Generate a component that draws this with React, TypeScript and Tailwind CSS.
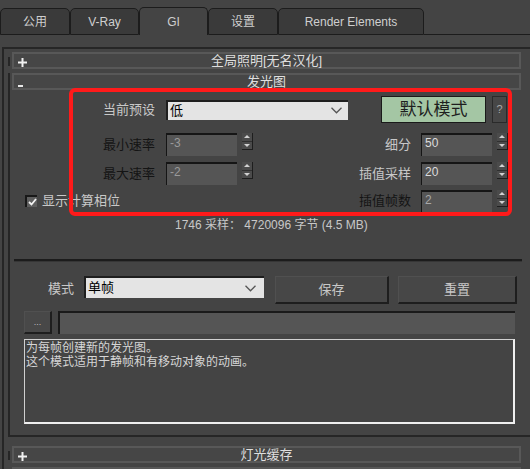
import React from 'react'

const font = "font-['Liberation_Sans','Noto_Sans_CJK_SC',sans-serif]"

function Tab({ label, w, active = false }: { label: string; w: string; active?: boolean }) {
  return (
    <div
      className={`flex items-center justify-center rounded-t-[5px] border-x border-t border-[#1c1c1c] text-[12px] text-[#cfcfcf] ${w} ${
        active ? 'h-[28px] bg-[#444444]' : 'h-[27px] border-b bg-[#3a3a3a]'
      }`}
    >
      {label}
    </div>
  )
}

function RolloutHeader({ open, title }: { open: boolean; title: string }) {
  return (
    <div className="grid h-[17px] w-[509px] grid-cols-[24px_1fr_24px] items-center border-2 border-[#585858] bg-[#464646] text-[13px] leading-[13px] text-[#dedede]">
      <div className="flex items-end justify-start pl-[4px] pt-[4px]">
        {open ? (
          <div className="mt-[4px] h-[2px] w-[5px] bg-[#e8e8e8]" />
        ) : (
          <svg width="9" height="9" viewBox="0 0 9 9">
            <rect x="3.5" y="0" width="2" height="9" fill="#f0f0f0" />
            <rect x="0" y="3.5" width="9" height="2" fill="#f0f0f0" />
          </svg>
        )}
      </div>
      <div className="text-center">{title}</div>
      <div />
    </div>
  )
}

function Spinner() {
  return (
    <div className="flex h-[17px] w-[11px] flex-col self-start border-r border-b border-[#1e1e1e] bg-[#4b4b4b]">
      <div className="flex flex-1 items-center justify-center border-b border-[#2f2f2f]">
        <div className="h-0 w-0 border-x-[3px] border-b-[3px] border-x-transparent border-b-[#d2d2d2]" />
      </div>
      <div className="flex flex-1 items-center justify-center">
        <div className="h-0 w-0 border-x-[3px] border-t-[3px] border-x-transparent border-t-[#d2d2d2]" />
      </div>
    </div>
  )
}

function NumField({ value, color }: { value: string; color: string }) {
  return (
    <div
      className={`h-full w-[71px] border-t-2 border-l border-[#151515] bg-[#555555] pl-[3px] pt-[1px] text-[12px] leading-[14px] ${color}`}
    >
      {value}
    </div>
  )
}

function Chevron() {
  return (
    <svg width="11" height="7" viewBox="0 0 11 7">
      <path d="M0.5 0.8 L5.5 5.8 L10.5 0.8" stroke="#555" strokeWidth="1.3" fill="none" />
    </svg>
  )
}

export default function App() {
  return (
    <div className={`relative h-[469px] w-[530px] overflow-hidden bg-[#444444] ${font}`}>
      {/* Tabs */}
      <div className="flex h-[35px] items-end pt-[7px]">
        <Tab label="公用" w="w-[70px]" />
        <Tab label="V-Ray" w="w-[69px]" />
        <Tab label="GI" w="w-[69px]" active />
        <Tab label="设置" w="w-[70px]" />
        <Tab label="Render Elements" w="w-[146px]" />
        <div className="h-full flex-1 border-b border-[#1c1c1c]" />
      </div>

      {/* Panel */}
      <div className="ml-[2px] mt-[12px] border-l-2 border-t-2 border-[#262626]">
        <div className="mt-[3px] flex items-center">
          <div className="ml-[4px] mt-[2px] h-[9px] w-[2px] bg-[#262626]" />
          <div className="ml-[2px]">
            <RolloutHeader open={false} title="全局照明[无名汉化]" />
          </div>
        </div>

        {/* 发光图 rollout */}
        <div className="ml-[4px] mt-[4px] border-l-2 border-b-2 border-[#262626] pb-[11px]">
          <div className="ml-[2px]">
            <RolloutHeader open title="发光图" />
          </div>

          <div className="mt-[6px] flex h-[27px] items-center">
            <div className="w-[145px] text-right text-[13px] text-[#c8c8c8]">当前预设</div>
            <div className="ml-[11px] flex h-[20px] w-[182px] items-center justify-between border-t-2 border-l-2 border-[#1e1e1e] bg-[#e4e4e4] pl-[2px] pr-[6px] text-[13px] text-black">
              <span>低</span>
              <Chevron />
            </div>
            <button className="ml-[33px] h-[27px] w-[105px] border border-[#1a1a1a] bg-[#a4c6a4] text-[17px] text-[#1e1e1e]">
              默认模式
            </button>
            <button className="ml-[6px] h-[27px] w-[15px] border border-[#2a2a2a] bg-[#474747] text-[11px] text-[#a8a8a8]">
              ?
            </button>
          </div>

          <div className="mt-[10px] flex h-[23px] items-center">
            <div className="w-[145px] text-right text-[13px] text-[#141414]">最小速率</div>
            <div className="ml-[11px] h-full">
              <NumField value="-3" color="text-[#9a9a9a]" />
            </div>
            <div className="ml-[5px] h-full">
              <Spinner />
            </div>
            <div className="w-[158px] text-right text-[13px] text-[#c8c8c8]">细分</div>
            <div className="ml-[10px] h-full">
              <NumField value="50" color="text-[#dcdcdc]" />
            </div>
            <div className="ml-[5px] h-full">
              <Spinner />
            </div>
          </div>

          <div className="mt-[6px] flex h-[23px] items-center">
            <div className="w-[145px] text-right text-[13px] text-[#141414]">最大速率</div>
            <div className="ml-[11px] h-full">
              <NumField value="-2" color="text-[#9a9a9a]" />
            </div>
            <div className="ml-[5px] h-full">
              <Spinner />
            </div>
            <div className="w-[158px] text-right text-[13px] text-[#c8c8c8]">插值采样</div>
            <div className="ml-[10px] h-full">
              <NumField value="20" color="text-[#dcdcdc]" />
            </div>
            <div className="ml-[5px] h-full">
              <Spinner />
            </div>
          </div>

          <div className="mt-[5px] flex h-[22px] items-center">
            <div className="flex w-[243px] items-center">
              <div className="ml-[15px] flex h-[12px] w-[12px] items-center justify-center border-t-2 border-l-2 border-[#181818] bg-[#5e5e5e]">
                <svg width="9" height="8" viewBox="0 0 9 8">
                  <path d="M1 4 L3.5 6.5 L8 1" stroke="#f2f2f2" strokeWidth="1.8" fill="none" />
                </svg>
              </div>
              <span className="ml-[5px] text-[13px] text-[#c8c8c8]">显示计算相位</span>
            </div>
            <div className="w-[158px] text-right text-[13px] text-[#141414]">插值帧数</div>
            <div className="ml-[10px] h-full">
              <NumField value="2" color="text-[#a8a8a8]" />
            </div>
            <div className="ml-[5px] h-full">
              <Spinner />
            </div>
          </div>

          <div className="ml-[165px] mt-[6px] text-[12px] leading-[14px] text-[#c8c8c8]">
            1746 采样： 4720096 字节 (4.5 MB)
          </div>

          <div className="ml-[4px] mt-[27px] w-[508px] border-t-2 border-b border-t-[#1c1c1c] border-b-[#363636]" />

          <div className="mt-[14px] flex h-[28px] items-start">
            <div className="ml-[38px] mt-[3px] text-[13px] text-[#c8c8c8]">模式</div>
            <div className="ml-[10px] flex h-[22px] w-[180px] items-center justify-between border-t-2 border-l-2 border-[#1e1e1e] bg-[#e4e4e4] pl-[2px] pr-[8px] text-[13px] text-black">
              <span>单帧</span>
              <Chevron />
            </div>
            <button className="ml-[11px] h-[28px] w-[114px] border-t border-l border-r-2 border-b-2 border-t-[#505050] border-l-[#505050] border-r-[#1e1e1e] border-b-[#1e1e1e] bg-[#474747] text-[13px] text-[#c8c8c8]">
              保存
            </button>
            <button className="ml-[9px] h-[28px] w-[119px] border-t border-l border-r-2 border-b-2 border-t-[#505050] border-l-[#505050] border-r-[#1e1e1e] border-b-[#1e1e1e] bg-[#474747] text-[13px] text-[#c8c8c8]">
              重置
            </button>
          </div>

          <div className="mt-[7px] flex h-[23px]">
            <button className="ml-[14px] h-full w-[28px] border-t border-l border-r-2 border-b-2 border-t-[#505050] border-l-[#505050] border-r-[#1e1e1e] border-b-[#1e1e1e] bg-[#484848] text-[9px] leading-[9px] text-[#bdbdbd]">
              ...
            </button>
            <div className="ml-[6px] h-full w-[457px] border-t-2 border-l-2 border-[#1a1a1a] bg-[#555555]" />
          </div>

          <div className="ml-[14px] mt-[5px] h-[85px] w-[491px] border border-r-2 border-b-2 border-[#d0d0d0] border-r-[#f0f0f0] border-b-[#f0f0f0] bg-[#444444] pl-[1px] pt-[1px] text-[12px] leading-[14px] text-[#d6d6d6]">
            <div>为每帧创建新的发光图。</div>
            <div>这个模式适用于静帧和有移动对象的动画。</div>
          </div>
        </div>

        <div className="mt-[9px] flex items-center">
          <div className="ml-[4px] mt-[2px] h-[9px] w-[2px] bg-[#262626]" />
          <div className="ml-[2px]">
            <RolloutHeader open={false} title="灯光缓存" />
          </div>
        </div>
        <div className="mt-[4px] flex items-center">
          <div className="ml-[4px] mt-[2px] h-[9px] w-[2px] bg-[#262626]" />
          <div className="ml-[2px]">
            <RolloutHeader open={false} title="焦散" />
          </div>
        </div>
      </div>

      {/* annotation */}
      <div className="pointer-events-none absolute left-[69px] top-[88px] h-[128px] w-[443px] rounded-[6px] border-4 border-[#ff1a1a]" />
    </div>
  )
}
